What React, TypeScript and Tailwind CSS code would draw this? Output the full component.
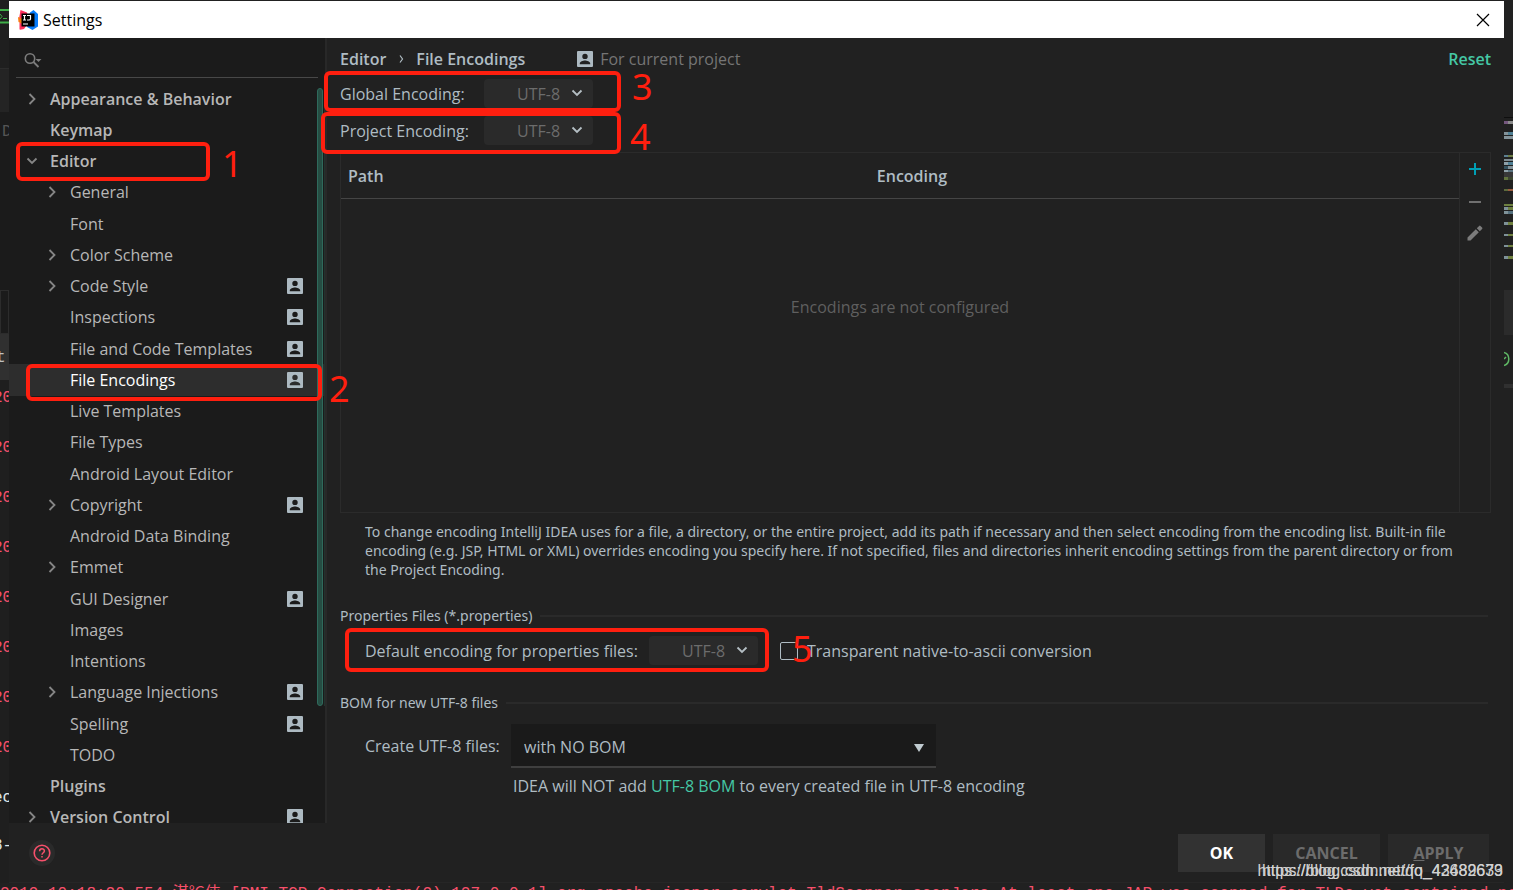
import type { ReactNode } from 'react';
import clsx from 'clsx';

type TreeItem = {
  label: string;
  level: 0 | 1;
  arrow?: 'right' | 'down';
  project?: boolean;
  selected?: boolean;
};

const TREE: TreeItem[] = [
  { label: 'Appearance & Behavior', level: 0, arrow: 'right' },
  { label: 'Keymap', level: 0 },
  { label: 'Editor', level: 0, arrow: 'down' },
  { label: 'General', level: 1, arrow: 'right' },
  { label: 'Font', level: 1 },
  { label: 'Color Scheme', level: 1, arrow: 'right' },
  { label: 'Code Style', level: 1, arrow: 'right', project: true },
  { label: 'Inspections', level: 1, project: true },
  { label: 'File and Code Templates', level: 1, project: true },
  { label: 'File Encodings', level: 1, project: true, selected: true },
  { label: 'Live Templates', level: 1 },
  { label: 'File Types', level: 1 },
  { label: 'Android Layout Editor', level: 1 },
  { label: 'Copyright', level: 1, arrow: 'right', project: true },
  { label: 'Android Data Binding', level: 1 },
  { label: 'Emmet', level: 1, arrow: 'right' },
  { label: 'GUI Designer', level: 1, project: true },
  { label: 'Images', level: 1 },
  { label: 'Intentions', level: 1 },
  { label: 'Language Injections', level: 1, arrow: 'right', project: true },
  { label: 'Spelling', level: 1, project: true },
  { label: 'TODO', level: 1 },
  { label: 'Plugins', level: 0 },
  { label: 'Version Control', level: 0, arrow: 'right', project: true },
];

function ProjectIcon({ className }: { className?: string }) {
  return (
    <svg viewBox="0 0 16 16" className={clsx('h-4 w-4 shrink-0', className)} aria-hidden="true">
      <path
        fill="#adbac2"
        fillRule="evenodd"
        d="M1 0h14a1 1 0 0 1 1 1v14a1 1 0 0 1-1 1H1a1 1 0 0 1-1-1V1a1 1 0 0 1 1-1zM8 2.700a2.700 2.700 0 1 0 0 5.400 2.700 2.700 0 0 0 0-5.400zM2.800 13.200h10.400v-.8c0-1.900-3.300-2.900-5.200-2.900s-5.200 1-5.200 2.900z"
      />
    </svg>
  );
}

function Chevron({ dir, className }: { dir: 'right' | 'down'; className?: string }) {
  return (
    <svg viewBox="0 0 12 12" className={clsx('h-3 w-3', className)} fill="none" aria-hidden="true">
      <path
        d={dir === 'right' ? 'M3.500 1l5 5-5 5' : 'M1.500 3.500l4.500 4.500 4.500-4.500'}
        stroke="currentColor"
        strokeWidth="1.800"
      />
    </svg>
  );
}

function IdeaLogo() {
  return (
    <svg viewBox="0 0 20 20" className="h-5 w-5" aria-hidden="true">
      <path fill="#fe315d" d="M2.500 0L9 2.500 11 12l-5 7-4 .5L2.500 14 1 9z" />
      <path fill="#f97a12" d="M0 7l4 1.500V14l-3.500-2z" />
      <path fill="#fe315d" d="M1.500 12.500l5 3-.5 3.500-4.500.5z" />
      <path fill="#087cfa" d="M12 2.500L15.500 0 20 4v12.500L14.500 20 9 17z" />
      <path fill="#000" d="M3.500 3.500h13v13h-13z" />
      <path
        stroke="#fff"
        strokeWidth="1.200"
        fill="none"
        d="M5 5.500h3M6.500 5.500v4.500M5 10h3M9 5.500h3.500V9q0 1-1.500 1H9M5 14h5"
      />
    </svg>
  );
}

/** Left-hand tree with the settings pages. */
function Sidebar() {
  return (
    <aside className="relative flex w-[318px] shrink-0 flex-col overflow-hidden border-r-2 border-[#282828] bg-[#1b1b1b]">
      <div className="mr-[7px] ml-[7px] flex h-10 shrink-0 items-center border-b border-[#484848] pt-1">
        <svg viewBox="0 0 18 16" className="ml-2 h-4 w-[18px] text-[#7c7c7c]" fill="none" aria-hidden="true">
          <circle cx="6" cy="6.500" r="4.700" stroke="currentColor" strokeWidth="1.600" />
          <path d="M9.500 10l5 5" stroke="currentColor" strokeWidth="1.800" />
          <path d="M11.500 7h6l-3 3z" fill="currentColor" />
        </svg>
        <input aria-label="Search settings" className="min-w-0 flex-1 bg-transparent outline-none" />
      </div>
      <div className="min-h-0 flex-1 overflow-hidden pt-[5px]">
        <ul className="grid h-[750px] auto-rows-fr">
          {TREE.map((item) => (
            <li
              key={item.label}
              className={clsx(
                'flex items-center pr-[22px]',
                item.level === 0 ? 'pl-[17px] font-semibold' : 'pl-[37px]',
                item.selected ? 'bg-[#2d2d2d] text-white' : 'text-[#b7b7b7]',
              )}
            >
              <span className="w-6 text-[#868686]">{item.arrow ? <Chevron dir={item.arrow} /> : null}</span>
              <span className="flex-1 whitespace-nowrap">{item.label}</span>
              {item.project ? <ProjectIcon /> : null}
            </li>
          ))}
        </ul>
      </div>
      <div className="absolute top-[50px] right-0 h-[618px] w-px bg-[#22332e]" />
      <div className="absolute top-[50px] right-[2px] h-[618px] w-[6px] rounded-full border border-[#2f6a5c] bg-[#264d43]" />
    </aside>
  );
}

function EncodingSelect({ id }: { id: string }) {
  return (
    <span className="relative flex w-[109px]">
      <select id={id} className="h-[29px] w-full appearance-none rounded-sm bg-[#2a2a2a] pl-[33px] text-[#6c6c6c]">
        <option>UTF-8</option>
      </select>
      <Chevron dir="down" className="pointer-events-none absolute top-2 right-[10px] text-[#b5bfc4]" />
    </span>
  );
}

function SectionTitle({ children }: { children: ReactNode }) {
  return (
    <h2 className="mr-[3px] flex items-center gap-2 font-['Noto_Sans',sans-serif] text-sm leading-5">
      {children}
      <span className="h-[2px] flex-1 bg-[#2a2a2a]" />
    </h2>
  );
}

function EncodingTable() {
  return (
    <div className="flex h-[361px] border border-[#2b2b2b]">
      <table className="min-w-0 flex-1 table-fixed">
        <thead>
          <tr className="h-[45px] border-b border-[#454545] text-left">
            <th className="w-[47.3%] pt-[2px] pl-[7px] font-semibold">Path</th>
            <th className="pt-[2px] pl-[7px] font-semibold">Encoding</th>
          </tr>
        </thead>
        <tbody>
          <tr>
            <td colSpan={2} className="pb-24 text-center text-[#5f5f5f]">
              Encodings are not configured
            </td>
          </tr>
        </tbody>
      </table>
      <div className="flex w-[31px] flex-col items-center gap-4 border-l border-[#2b2b2b] pt-2">
        <button aria-label="Add">
          <svg viewBox="0 0 16 16" className="h-4 w-4" aria-hidden="true">
            <path d="M8 2v12M2 8h12" stroke="#009fb5" strokeWidth="2" />
          </svg>
        </button>
        <button aria-label="Remove">
          <svg viewBox="0 0 16 16" className="h-4 w-4" aria-hidden="true">
            <path d="M2 9h12" stroke="#707070" strokeWidth="2" />
          </svg>
        </button>
        <button aria-label="Edit">
          <svg viewBox="0 0 16 16" className="h-4 w-4" fill="#7c7c7c" aria-hidden="true">
            <path d="M.5 12.500V15.500h3l8.300-8.300-3-3zM9.800 3.200l3 3 2.300-2.300a1 1 0 0 0 0-1.400L13.500.9a1 1 0 0 0-1.400 0z" />
          </svg>
        </button>
      </div>
    </div>
  );
}

function EncodingsPage() {
  return (
    <main className="flex min-w-0 flex-1 flex-col pr-[13px] pl-[13px] text-[#afbcc3]">
      <header className="flex h-[41px] items-center font-semibold">
        <span>Editor</span>
        <svg viewBox="0 0 6 8" className="mx-3 h-2 w-[6px]" fill="none" aria-hidden="true">
          <path d="M2 .5L4.500 4 2 7.500" stroke="currentColor" strokeWidth="1.200" />
        </svg>
        <span>File Encodings</span>
        <ProjectIcon className="mr-[7px] ml-[52px]" />
        <span className="font-normal text-[#757575]">For current project</span>
        <button className="ml-auto font-semibold text-[#45c8a5]">Reset</button>
      </header>
      <div className="grid grid-cols-[144px_1fr] items-center gap-y-2">
        <label htmlFor="global-encoding">Global Encoding:</label>
        <EncodingSelect id="global-encoding" />
        <label htmlFor="project-encoding">Project Encoding:</label>
        <EncodingSelect id="project-encoding" />
      </div>
      <div className="mt-[7px]">
        <EncodingTable />
      </div>
      <p className="mt-[9px] pl-[25px] font-['Noto_Sans',sans-serif] text-sm leading-[19px] whitespace-nowrap">
        To change encoding IntelliJ IDEA uses for a file, a directory, or the entire project, add its path if necessary
        and then select encoding from the encoding list. Built-in file
        <br />
        encoding (e.g. JSP, HTML or XML) overrides encoding you specify here. If not specified, files and directories
        inherit encoding settings from the parent directory or from
        <br />
        the Project Encoding.
      </p>
      <div className="mt-[27px]">
        <SectionTitle>Properties Files (*.properties)</SectionTitle>
        <div className="mt-[10px] flex items-center pl-[25px]">
          <label htmlFor="properties-encoding" className="w-[284px]">
            Default encoding for properties files:
          </label>
          <EncodingSelect id="properties-encoding" />
          <label className="ml-[22px] flex items-center gap-[9px]">
            <input type="checkbox" className="h-[18px] w-[18px] appearance-none rounded-xs border border-[#afbcc3]" />
            Transparent native-to-ascii conversion
          </label>
        </div>
      </div>
      <div className="mt-7">
        <SectionTitle>BOM for new UTF-8 files</SectionTitle>
        <div className="mt-[11px] grid grid-cols-[146px_1fr] items-center pl-[25px]">
          <label htmlFor="bom">Create UTF-8 files:</label>
          <span className="relative w-[425px]">
            <select
              id="bom"
              className="block h-11 w-full appearance-none border-b-2 border-[#3f3f3f] bg-[#1a1a1a] pt-1 pl-[13px]"
            >
              <option>with NO BOM</option>
            </select>
            <svg viewBox="0 0 10 8" className="pointer-events-none absolute top-5 right-3 h-2 w-[10px]" aria-hidden="true">
              <path d="M0 0h10L5 8z" fill="#c0cbd0" />
            </svg>
          </span>
          <p className="col-start-2 pt-[6px] pl-[2px] leading-6">
            IDEA will NOT add{' '}
            <a href="#bom" className="text-[#45c8a5]">
              UTF-8 BOM
            </a>{' '}
            to every created file in UTF-8 encoding
          </p>
        </div>
      </div>
    </main>
  );
}

function Footer() {
  return (
    <footer className="flex h-[59px] shrink-0 items-center gap-2 pr-[15px] pl-5 font-semibold text-[#6c6c6c]">
      <button aria-label="Help" className="mr-auto flex h-[26px] w-[26px] items-center justify-center rounded-full bg-[#2a2a2a]">
        <svg viewBox="0 0 18 18" className="h-[18px] w-[18px]" fill="none" stroke="#f7506b" aria-hidden="true">
          <circle cx="9" cy="9" r="7.800" strokeWidth="1.600" />
          <path d="M6.600 7.200c0-3.200 4.800-3.200 4.800-.2 0 1.600-2.400 1.900-2.400 3.700M9 12v1.600" strokeWidth="1.500" />
        </svg>
      </button>
      <button className="h-[38px] w-[87px] bg-[#323232] font-bold text-white">OK</button>
      <button className="h-[38px] w-[107px] bg-[#292929] font-bold">CANCEL</button>
      <button className="h-[38px] w-[101px] bg-[#292929] font-bold">
        <span className="underline">A</span>PPLY
      </button>
    </footer>
  );
}

/** Sliver of the editor window left of the dialog. */
function EditorLeftEdge() {
  return (
    <div className="w-[9px] shrink-0 overflow-hidden bg-[#1f1f1f] font-['Liberation_Mono',monospace] whitespace-nowrap">
      <svg viewBox="0 0 9 16" className="mt-2 h-4 w-[9px]" fill="none" stroke="#3fae49" aria-hidden="true">
        <path d="M0 2h9M0 14.500h9" strokeWidth="2" />
        <path d="M0 6l2 2.500L0 11M3 10.500h4" />
      </svg>
      <div className="mt-[44px] h-[44px] border-t border-[#2c2c2c] bg-[#242424]" />
      <div className="h-[178px] bg-[#1b1b1b] pt-2 pl-[2px] text-base text-[#555]">D</div>
      <div className="h-[44px] border border-[#2c2c2c] bg-[#1b1b1b]" />
      <div className="-ml-1 h-[46px] bg-[#303030] pt-3 text-base text-[#c0c0c0]">t</div>
      <div className="-ml-[7px] pt-[2px] text-base text-[#f7506b]">
        {['a', 'b', 'c', 'd', 'e', 'f', 'g', 'h'].map((line) => (
          <div key={line} className="h-[50px] leading-8">
            20
          </div>
        ))}
      </div>
      <div className="-ml-[7px] text-base leading-[48px] text-[#dfe7ea]">
        <div className="-mt-2">ec</div>
        <div>8-</div>
      </div>
    </div>
  );
}

const MINIMAP = [
  { y: 121, h: 3, left: '#75587f', right: '#8b8b8b' },
  { y: 132, h: 3, left: '#839299', right: '#4f8095' },
  { y: 136, h: 3, left: '#839299', right: '#839299' },
  { y: 155, h: 2, left: '#5d8090', right: '#6c7d45' },
  { y: 159, h: 2, left: '#7d8b91', right: '#7d8b91' },
  { y: 162, h: 3, left: '#8fa0a8', right: '#4f8095' },
  { y: 166, h: 3, left: '#33515e', right: '#839299' },
  { y: 170, h: 2, left: '#8fa0a8', right: '#5a7480' },
  { y: 177, h: 3, left: '#62743e', right: '#3c4630' },
  { y: 189, h: 2, left: '#5c6a3c', right: '#9a5c40' },
  { y: 204, h: 2, left: '#6d8040', right: '#6d8040' },
  { y: 207, h: 3, left: '#7f9299', right: '#6d8040' },
  { y: 211, h: 3, left: '#7f9299', right: '#56717e' },
  { y: 222, h: 3, left: '#7f9299', right: '#70813f' },
  { y: 234, h: 2, left: '#7f9299', right: '#70813f' },
  { y: 245, h: 2, left: '#7f9299', right: '#70813f' },
  { y: 256, h: 3, left: '#7f9299', right: '#70813f' },
];

/** Sliver of the code minimap right of the dialog. */
function EditorRightEdge() {
  return (
    <div className="w-[9px] shrink-0 overflow-hidden bg-[#212121]">
      <svg viewBox="0 0 9 400" className="h-[400px] w-[9px]" aria-hidden="true">
        <path d="M0 117h9v1H0z" fill="#0f0f0f" />
        <path d="M0 172h9v5H0z" fill="#383838" />
        <path d="M0 290h9v45H0z" fill="#2b2b2b" />
        <path d="M0 384h9v4H0z" fill="#303030" />
        {MINIMAP.map((line) => (
          <g key={line.y}>
            <rect y={line.y} width="4" height={line.h} fill={line.left} />
            <rect x="4" y={line.y} width="5" height={line.h} fill={line.right} />
          </g>
        ))}
        <path d="M0 352.500a6.800 6.800 0 0 1 0 13M0 359l2-2" fill="none" stroke="#5fb865" strokeWidth="1.500" />
      </svg>
    </div>
  );
}

/** Red frames and numbers drawn over the dialog. */
function Annotations() {
  const frame = 'absolute rounded-md border-4 border-[#ff1f0f]';
  return (
    <div className="pointer-events-none absolute inset-0 font-['Noto_Sans',sans-serif] text-4xl leading-9 text-[#ff1f0f]">
      <div className={clsx(frame, 'top-[142px] left-[16px] h-[39px] w-[194px]')} />
      <span className="absolute top-[146px] left-[222px]">1</span>
      <div className={clsx(frame, 'top-[364px] left-[26px] h-[37px] w-[296px]')} />
      <span className="absolute top-[371px] left-[329px]">2</span>
      <div className={clsx(frame, 'top-[71px] left-[324px] h-[41px] w-[297px]')} />
      <span className="absolute top-[69px] left-[632px]">3</span>
      <div className={clsx(frame, 'top-[112px] left-[321px] h-[42px] w-[300px]')} />
      <span className="absolute top-[119px] left-[630px]">4</span>
      <div className={clsx(frame, 'top-[628px] left-[345px] h-[44px] w-[424px]')} />
      <span className="absolute top-[631px] left-[792px]">5</span>
    </div>
  );
}

export default function App() {
  return (
    <div className="relative flex h-screen min-h-[890px] flex-col overflow-hidden bg-[#212121] font-['Open_Sans','Noto_Sans',sans-serif] text-base">
      <div className="flex min-h-0 flex-1">
        <EditorLeftEdge />
        <div className="mt-px flex min-w-0 flex-1 flex-col border-b border-[#262626] bg-[#212121]">
          <div className="flex h-[37px] shrink-0 items-center bg-white pr-[14px] pl-[9px] text-black">
            <IdeaLogo />
            <h1 className="ml-[5px]">Settings</h1>
            <button aria-label="Close" className="ml-auto">
              <svg viewBox="0 0 14 14" className="h-[14px] w-[14px]" aria-hidden="true">
                <path d="M1 1l12 12M13 1L1 13" stroke="#000" strokeWidth="1.200" />
              </svg>
            </button>
          </div>
          <div className="flex min-h-0 flex-1">
            <Sidebar />
            <EncodingsPage />
          </div>
          <Footer />
        </div>
        <EditorRightEdge />
      </div>
      <div className="h-[7px] shrink-0 overflow-hidden font-['Liberation_Mono','Noto_Sans_CJK_SC',monospace] text-base leading-[22px] whitespace-pre text-[#f7506b]">
        2019 10:18:20.554 淇℃伅 [RMI TCP Connection(2)-127.0.0.1] org.apache.jasper.servlet.TldScanner.scanJars At
        least one JAR was scanned for TLDs yet contained no TLDs.
      </div>
      <Annotations />
      <div className="pointer-events-none absolute right-[10px] bottom-[7px] font-['Liberation_Sans',sans-serif] text-base text-[#d0d0d0]">
        <span className="absolute right-0 bottom-0 whitespace-nowrap">https://blog.csdn.net/qq_42489639</span>
        <span className="absolute right-0 bottom-0 whitespace-nowrap">https://blog.csdn.net/fo_43682673</span>
      </div>
    </div>
  );
}
